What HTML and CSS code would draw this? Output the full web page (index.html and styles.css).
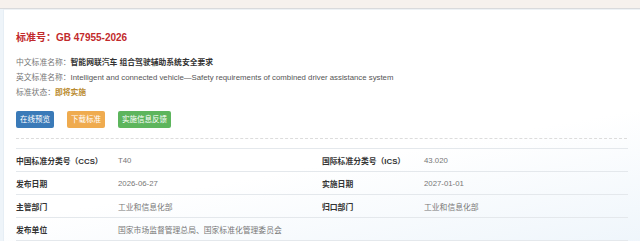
FILE: index.html
```html
<!DOCTYPE html>
<html lang="zh">
<head>
<meta charset="utf-8">
<link rel="stylesheet" href="styles.css">
</head>
<body>
<div class="topbar"></div>
<div class="panel">
  <h1 class="title">标准号：GB 47955-2026</h1>
  <div class="info">
    <div class="info-row"><span class="lbl">中文标准名称：</span><span class="cn-name">智能网联汽车 组合驾驶辅助系统安全要求</span></div>
    <div class="info-row"><span class="lbl">英文标准名称：</span><span class="en-name">Intelligent and connected vehicle—Safety requirements of combined driver assistance system</span></div>
    <div class="info-row"><span class="lbl">标准状态：</span><span class="status">即将实施</span></div>
  </div>
  <div class="buttons">
    <span class="btn btn-blue">在线预览</span>
    <span class="btn btn-orange">下载标准</span>
    <span class="btn btn-green">实施信息反馈</span>
  </div>
  <div class="dash"></div>
  <table class="meta">
    <tr><th>中国标准分类号（CCS）</th><td>T40</td><th>国际标准分类号（ICS）</th><td>43.020</td></tr>
    <tr><th>发布日期</th><td>2026-06-27</td><th>实施日期</th><td>2027-01-01</td></tr>
    <tr><th>主管部门</th><td>工业和信息化部</td><th>归口部门</th><td>工业和信息化部</td></tr>
    <tr><th>发布单位</th><td colspan="3">国家市场监督管理总局、国家标准化管理委员会</td></tr>
  </table>
</div>
</body>
</html>
```
FILE: styles.css
```css
html, body {
  margin: 0;
  padding: 0;
}
body {
  background: #eef4f9;
  font-family: "Liberation Sans", Arial, "Noto Sans CJK SC", sans-serif;
  width: 640px;
  height: 241px;
  overflow: hidden;
}
.topbar {
  height: 8px;
  background: #f6f1ed;
  border-bottom: 1px solid #d9dadc;
}
.panel {
  margin-left: 3px;
  padding: 0 13px 0 12px;
  background: linear-gradient(170deg, #ffffff 0%, #ffffff 60%, #eef5fb 100%);
  border-left: 1px solid #e6eef5;
  border-top: 1px solid #eef2f5;
  height: 240px;
}
.title {
  margin: 0;
  padding-top: 20px;
  height: 16px;
  line-height: 16px;
  font-size: 10px;
  font-weight: bold;
  color: #c22a2c;
}
.info {
  margin-top: 9px;
  font-size: 7.8px;
  color: #666;
}
.info-row {
  height: 15px;
  line-height: 15px;
  white-space: nowrap;
}
.lbl { color: #777; }
.cn-name { color: #333; font-weight: bold; }
.en-name { color: #555; }
.status { color: #b98a2e; font-weight: bold; }
.buttons {
  display: flex;
  gap: 13px;
  margin-top: 11px;
}
.btn {
  display: block;
  height: 17px;
  line-height: 17px;
  padding: 0 4px;
  font-size: 7.5px;
  color: #fff;
  border-radius: 2px;
}
.btn-blue { background: #3a7ab8; }
.btn-orange { background: #efab4f; }
.btn-green { background: #5db55d; }
.dash {
  margin-top: 10px;
  border-top: 1px dashed #dcdcdc;
}
.meta {
  width: 612px;
  margin-top: 9px;
  border-collapse: collapse;
  table-layout: fixed;
  font-size: 7.8px;
}
.meta tr {
  height: 23px;
  border-top: 1px solid #e4e8ec;
  border-bottom: 1px solid #e4e8ec;
}
.meta th {
  width: 102px;
  text-align: left;
  font-weight: bold;
  color: #333;
  padding: 0;
}
.meta td {
  width: 204px;
  color: #777;
  padding: 0;
}
```
